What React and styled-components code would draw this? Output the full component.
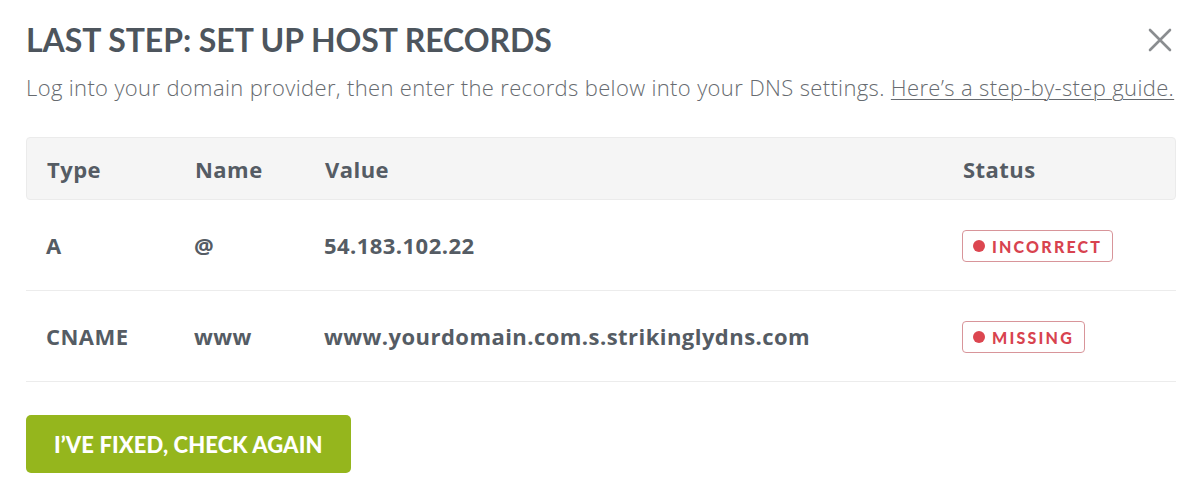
import React from 'react'
import styled, { createGlobalStyle } from 'styled-components'

const GlobalStyle = createGlobalStyle`
    * {
        box-sizing: border-box;
    }
    body {
        margin: 0;
        background: #ffffff;
        font-family: "Open Sans", "Liberation Sans", sans-serif;
    }
`;

const records = [
    { type: 'A', name: '@', value: '54.183.102.22', status: 'INCORRECT' },
    { type: 'CNAME', name: 'www', value: 'www.yourdomain.com.s.strikinglydns.com', status: 'MISSING' },
];

function App() {
    return (
        <>
            <GlobalStyle />
            <Modal>
                <Header>
                    <Title>Last step: set up host records</Title>
                    <CloseButton aria-label="Close">
                        <svg width="24" height="24" viewBox="0 0 24 24">
                            <path d="M2 2 L22 22 M22 2 L2 22" stroke="#8a8d90" strokeWidth="2.6" strokeLinecap="round" />
                        </svg>
                    </CloseButton>
                </Header>
                <Intro>
                    Log into your domain provider, then enter the records below into your DNS settings.{' '}
                    <a href="#guide">Here’s a step-by-step guide.</a>
                </Intro>

                <Table>
                    <HeadRow>
                        <Cell>Type</Cell>
                        <Cell>Name</Cell>
                        <Cell>Value</Cell>
                        <Cell>Status</Cell>
                    </HeadRow>
                    {records.map((record) => (
                        <Row key={record.type}>
                            <Cell>{record.type}</Cell>
                            <Cell>{record.name}</Cell>
                            <Cell>{record.value}</Cell>
                            <Cell>
                                <Badge>
                                    <Dot />
                                    {record.status}
                                </Badge>
                            </Cell>
                        </Row>
                    ))}
                </Table>

                <CheckButton>I’ve fixed, check again</CheckButton>
            </Modal>
        </>
    )
}

const Modal = styled.div`
    padding: 20px 24px 0 26px;
`;

const Header = styled.div`
    display: flex;
    justify-content: space-between;
    align-items: center;
`;

const Title = styled.h1`
    margin: 0;
    font-family: Lato, "Liberation Sans", sans-serif;
    font-weight: 700;
    font-size: 32px;
    line-height: 40px;
    letter-spacing: -0.05px;
    text-transform: uppercase;
    color: #4d555d;
`;

const CloseButton = styled.button`
    display: flex;
    border: none;
    background: none;
    padding: 0;
    margin-right: 4px;
    cursor: pointer;
`;

const Intro = styled.p`
    margin: 11px 0 0;
    font-size: 22px;
    font-weight: 300;
    line-height: 32px;
    color: #676b70;
    letter-spacing: 0.35px;
    white-space: nowrap;
    a {
        color: #676b70;
        text-decoration: underline;
        text-decoration-thickness: 1px;
        text-underline-offset: 3px;
    }
`;

const Table = styled.div`
    margin-top: 34px;
`;

const Row = styled.div`
    display: grid;
    grid-template-columns: 148px 130px 638px 1fr;
    align-items: center;
    height: 91px;
    border-bottom: 1px solid #ececec;
    font-weight: 700;
    font-size: 22px;
    letter-spacing: 0.45px;
    color: #555c64;
`;

const HeadRow = styled(Row)`
    height: 63px;
    background: #f5f5f5;
    border: 1px solid #ebebeb;
    border-radius: 4px;
`;

const Cell = styled.div`
    padding-left: 20px;
    white-space: nowrap;
`;

const Badge = styled.span`
    display: inline-flex;
    align-items: center;
    gap: 7px;
    height: 32px;
    padding: 0 10px 0 10px;
    border: 1px solid #d8959a;
    border-radius: 4px;
    font-family: Lato, "Liberation Sans", sans-serif;
    font-weight: 900;
    font-size: 16px;
    letter-spacing: 2.2px;
    color: #d8434f;
`;

const Dot = styled.span`
    width: 12px;
    height: 12px;
    border-radius: 50%;
    background: #dc4650;
`;

const CheckButton = styled.button`
    margin-top: 33px;
    height: 58px;
    padding: 0 28px;
    border: none;
    border-radius: 5px;
    background: #95b61d;
    color: #ffffff;
    font-family: Lato, "Liberation Sans", sans-serif;
    font-weight: 900;
    font-size: 22px;
    letter-spacing: 0.1px;
    text-transform: uppercase;
    cursor: pointer;
`;

export default App
